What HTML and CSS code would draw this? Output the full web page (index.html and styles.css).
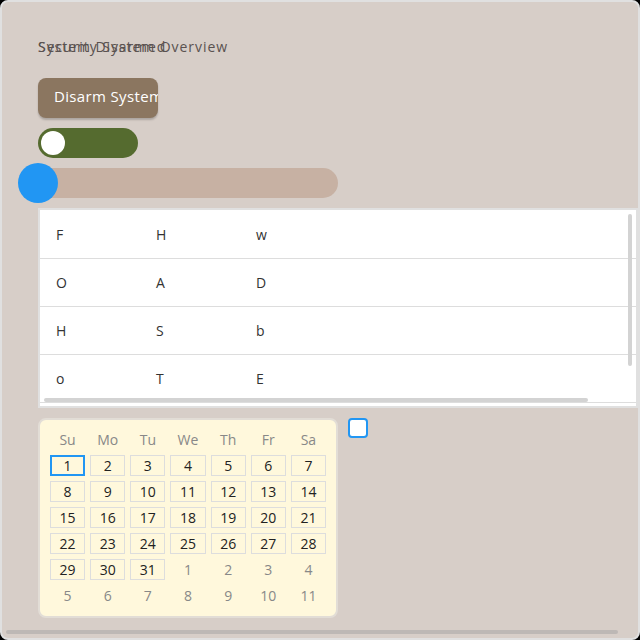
FILE: index.html
```html
<!DOCTYPE html>
<html>
<head>
<meta charset="utf-8">
<link rel="stylesheet" href="styles.css">
</head>
<body>
<div class="app">
  <div class="title-stack">
    <h2 class="title">Security System Overview</h2>
    <div class="status">System Disarmed</div>
  </div>
  <button class="btn">Disarm System</button>
  <div class="toggle"><span class="knob"></span></div>
  <div class="slider"><span class="thumb"></span></div>
  <div class="table-wrap">
    <table class="grid">
      <tr><td>F</td><td>H</td><td>w</td><td></td></tr>
      <tr><td>O</td><td>A</td><td>D</td><td></td></tr>
      <tr><td>H</td><td>S</td><td>b</td><td></td></tr>
      <tr><td>o</td><td>T</td><td>E</td><td></td></tr>
      <tr><td>K</td><td>L</td><td>m</td><td></td></tr>
    </table>
    <span class="sb sb-v"></span>
    <span class="sb sb-h"></span>
  </div>
  <div class="bottom-row">
    <div class="calendar">
      <div class="dow">Su</div><div class="dow">Mo</div><div class="dow">Tu</div><div class="dow">We</div><div class="dow">Th</div><div class="dow">Fr</div><div class="dow">Sa</div>
      <div class="day sel">1</div><div class="day">2</div><div class="day">3</div><div class="day">4</div><div class="day">5</div><div class="day">6</div><div class="day">7</div>
      <div class="day">8</div><div class="day">9</div><div class="day">10</div><div class="day">11</div><div class="day">12</div><div class="day">13</div><div class="day">14</div>
      <div class="day">15</div><div class="day">16</div><div class="day">17</div><div class="day">18</div><div class="day">19</div><div class="day">20</div><div class="day">21</div>
      <div class="day">22</div><div class="day">23</div><div class="day">24</div><div class="day">25</div><div class="day">26</div><div class="day">27</div><div class="day">28</div>
      <div class="day">29</div><div class="day">30</div><div class="day">31</div><div class="day other">1</div><div class="day other">2</div><div class="day other">3</div><div class="day other">4</div>
      <div class="day other">5</div><div class="day other">6</div><div class="day other">7</div><div class="day other">8</div><div class="day other">9</div><div class="day other">10</div><div class="day other">11</div>
    </div>
    <div class="check"></div>
  </div>
  <span class="sb sb-main"></span>
</div>
</body>
</html>
```

FILE: styles.css
```css
html, body {
  margin: 0;
  padding: 0;
  background: #000;
}
.app {
  position: relative;
  box-sizing: border-box;
  width: 640px;
  height: 640px;
  border: 2px solid #e0e0e0;
  border-radius: 8px;
  background: #d7cec8;
  padding: 36px 36px 0 36px;
  overflow: hidden;
  display: flex;
  flex-direction: column;
  align-items: flex-start;
  gap: 10px;
  font-family: "Open Sans", sans-serif;
}
.sb {
  position: absolute;
  border-radius: 2px;
  background: #d3d3d3;
}
.sb-v {
  left: 588px;
  top: 4px;
  width: 4px;
  height: 152px;
}
.sb-h {
  left: 4px;
  top: 188px;
  width: 544px;
  height: 4px;
}
.sb-main {
  left: 4px;
  top: 628px;
  width: 612px;
  height: 4px;
  background: #bdb8b5;
}
.title-stack {
  display: grid;
  height: 30px;
}
.title, .status {
  grid-area: 1 / 1;
  margin: 0;
  font-size: 14px;
  font-weight: 400;
  line-height: 17px;
  letter-spacing: 0.95px;
  color: #5a5250;
  white-space: nowrap;
}
.btn {
  flex: none;
  box-sizing: border-box;
  width: 120px;
  height: 40px;
  border: none;
  border-radius: 8px;
  background: #8b7660;
  color: #fff;
  font-family: "Open Sans", sans-serif;
  font-size: 15px;
  letter-spacing: 0.35px;
  text-align: left;
  padding: 0 0 4px 16px;
  white-space: nowrap;
  overflow: hidden;
  box-shadow: 0 2px 2px rgba(0,0,0,0.2);
}
.toggle {
  flex: none;
  width: 100px;
  height: 30px;
  border-radius: 15px;
  background: #556b2f;
  display: flex;
  align-items: center;
  padding-left: 3px;
  box-sizing: border-box;
}
.knob {
  width: 24px;
  height: 24px;
  border-radius: 50%;
  background: #fff;
}
.slider {
  flex: none;
  position: relative;
  width: 300px;
  height: 30px;
  border-radius: 15px;
  background: #c7b1a3;
}
.thumb {
  position: absolute;
  left: -20px;
  top: -5px;
  width: 40px;
  height: 40px;
  border-radius: 50%;
  background: #2196f3;
}
.table-wrap {
  position: relative;
  flex: none;
  box-sizing: border-box;
  width: 600px;
  height: 200px;
  border: 2px solid #e0e0e0;
  background: #fff;
  overflow: hidden;
}
.grid {
  border-collapse: collapse;
  width: 650px;
  margin-top: 1px;
  font-family: "Open Sans", sans-serif;
  font-size: 14px;
  color: #333;
}
.grid td {
  height: 47px;
  padding: 0 16px;
  border-bottom: 1px solid #ddd;
  width: 68px;
}
.grid td:last-child {
  width: auto;
}
.bottom-row {
  flex: none;
  display: flex;
  gap: 10px;
  align-items: flex-start;
}
.calendar {
  box-sizing: border-box;
  width: 300px;
  height: 200px;
  border: 2px solid #e2ddd6;
  border-radius: 8px;
  background: #fff8dc;
  padding: 10px;
  display: grid;
  grid-template-columns: repeat(7, 1fr);
  grid-template-rows: 20px repeat(6, 21px);
  gap: 5px;
}
.dow {
  display: flex;
  align-items: center;
  justify-content: center;
  font-size: 14px;
  line-height: 20px;
  color: #888;
}
.day {
  box-sizing: border-box;
  display: flex;
  align-items: center;
  justify-content: center;
  border: 1px solid #ddd;
  font-size: 14px;
  line-height: 18px;
  color: #222;
}
.day.sel {
  border: 2px solid #2196f3;
}
.day.other {
  border-color: transparent;
  color: #888;
}
.check {
  box-sizing: border-box;
  width: 20px;
  height: 20px;
  border: 2px solid #2196f3;
  border-radius: 4px;
  background: #fff;
}
```
